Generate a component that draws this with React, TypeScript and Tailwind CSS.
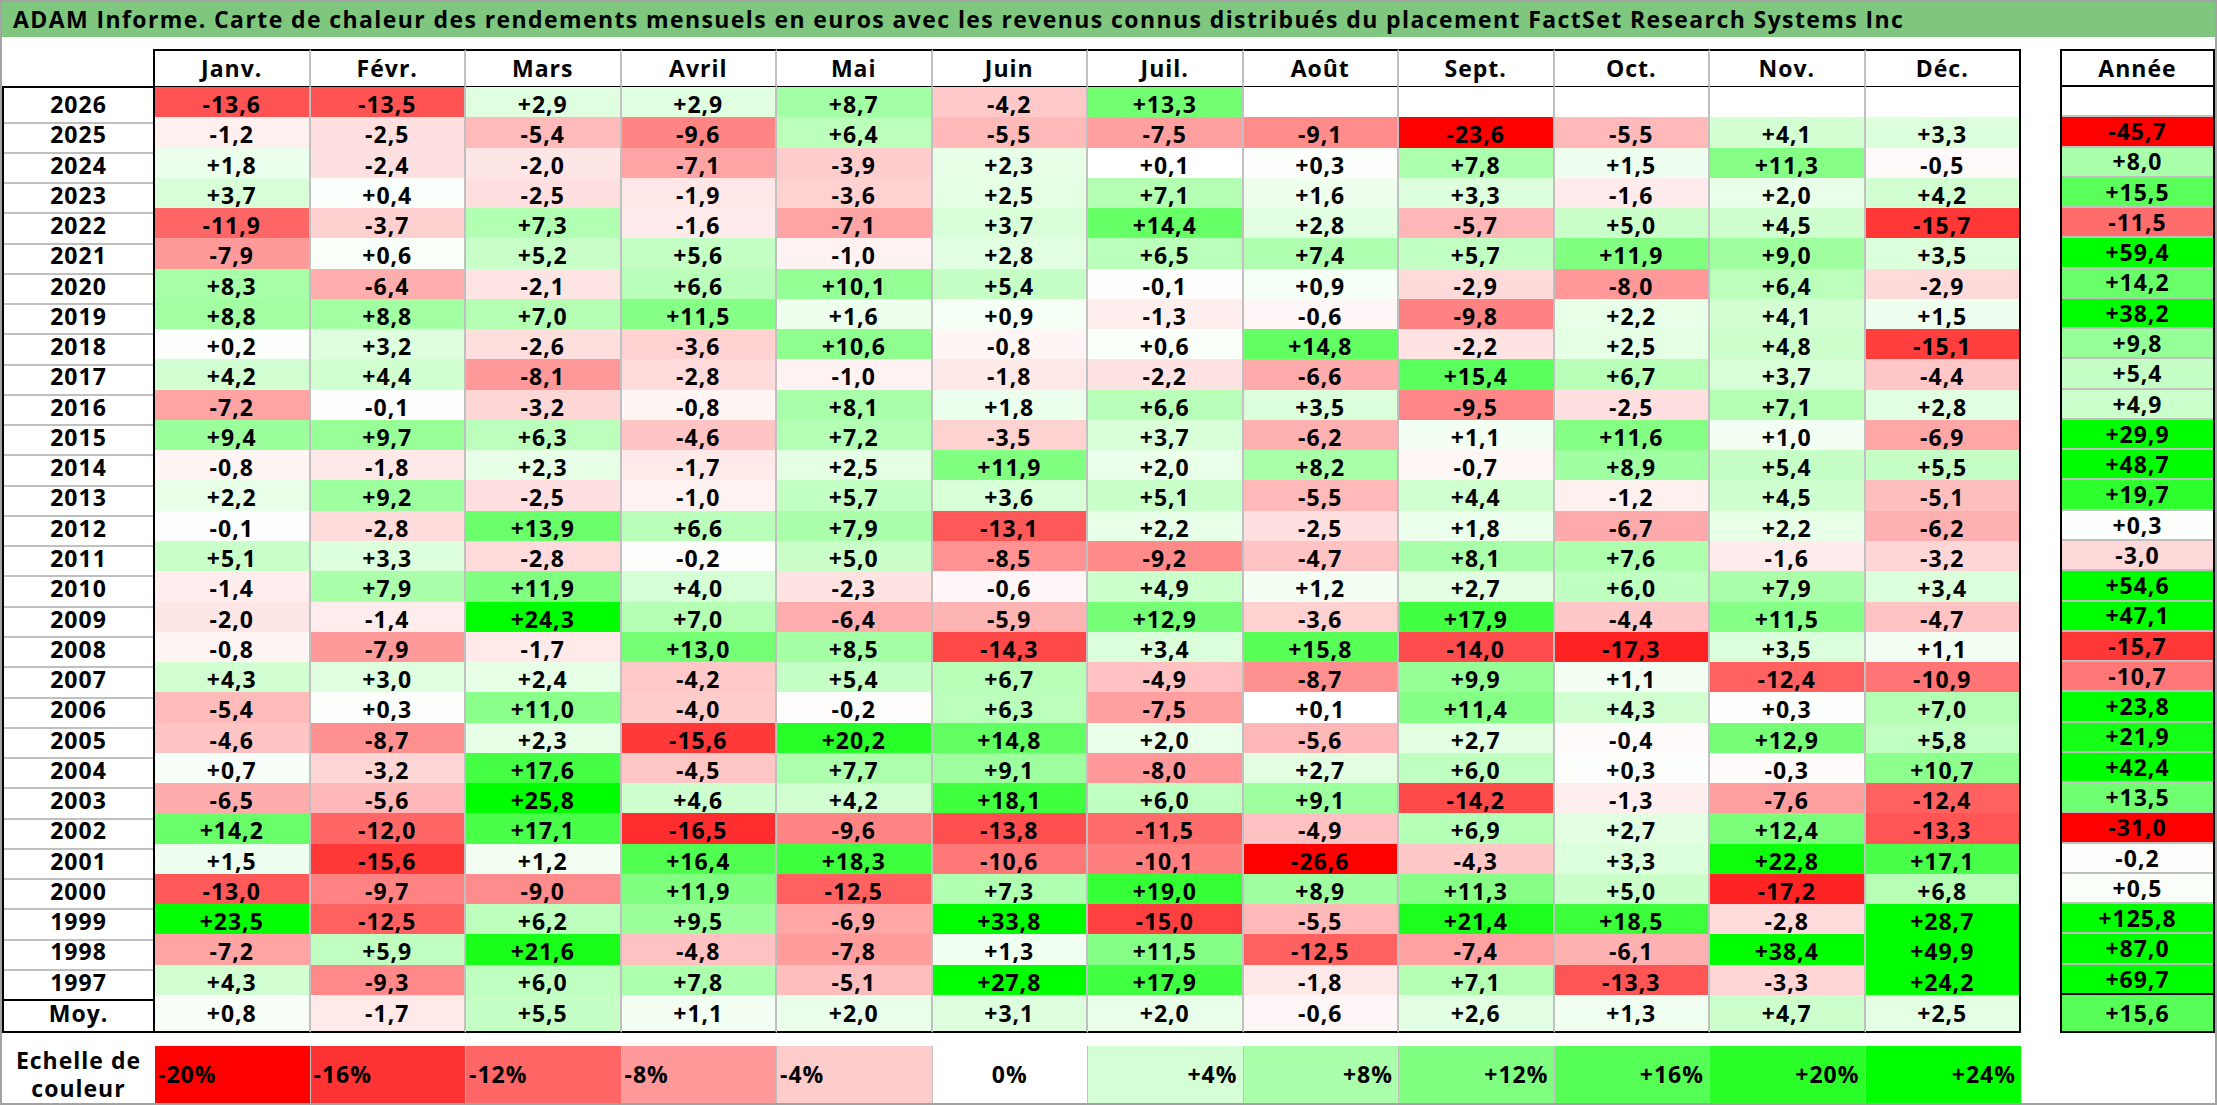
import React from 'react';

const MONTHS = ['Janv.', 'Févr.', 'Mars', 'Avril', 'Mai', 'Juin', 'Juil.', 'Août', 'Sept.', 'Oct.', 'Nov.', 'Déc.'];

// year | 12 months | annual total ("x" = no data yet)
const RAW: [string, string][] = [
  ['2026', '-13.6 -13.5 2.9 2.9 8.7 -4.2 13.3 x x x x x x'],
  ['2025', '-1.2 -2.5 -5.4 -9.6 6.4 -5.5 -7.5 -9.1 -23.6 -5.5 4.1 3.3 -45.7'],
  ['2024', '1.8 -2.4 -2.0 -7.1 -3.9 2.3 0.1 0.3 7.8 1.5 11.3 -0.5 8.0'],
  ['2023', '3.7 0.4 -2.5 -1.9 -3.6 2.5 7.1 1.6 3.3 -1.6 2.0 4.2 15.5'],
  ['2022', '-11.9 -3.7 7.3 -1.6 -7.1 3.7 14.4 2.8 -5.7 5.0 4.5 -15.7 -11.5'],
  ['2021', '-7.9 0.6 5.2 5.6 -1.0 2.8 6.5 7.4 5.7 11.9 9.0 3.5 59.4'],
  ['2020', '8.3 -6.4 -2.1 6.6 10.1 5.4 -0.1 0.9 -2.9 -8.0 6.4 -2.9 14.2'],
  ['2019', '8.8 8.8 7.0 11.5 1.6 0.9 -1.3 -0.6 -9.8 2.2 4.1 1.5 38.2'],
  ['2018', '0.2 3.2 -2.6 -3.6 10.6 -0.8 0.6 14.8 -2.2 2.5 4.8 -15.1 9.8'],
  ['2017', '4.2 4.4 -8.1 -2.8 -1.0 -1.8 -2.2 -6.6 15.4 6.7 3.7 -4.4 5.4'],
  ['2016', '-7.2 -0.1 -3.2 -0.8 8.1 1.8 6.6 3.5 -9.5 -2.5 7.1 2.8 4.9'],
  ['2015', '9.4 9.7 6.3 -4.6 7.2 -3.5 3.7 -6.2 1.1 11.6 1.0 -6.9 29.9'],
  ['2014', '-0.8 -1.8 2.3 -1.7 2.5 11.9 2.0 8.2 -0.7 8.9 5.4 5.5 48.7'],
  ['2013', '2.2 9.2 -2.5 -1.0 5.7 3.6 5.1 -5.5 4.4 -1.2 4.5 -5.1 19.7'],
  ['2012', '-0.1 -2.8 13.9 6.6 7.9 -13.1 2.2 -2.5 1.8 -6.7 2.2 -6.2 0.3'],
  ['2011', '5.1 3.3 -2.8 -0.2 5.0 -8.5 -9.2 -4.7 8.1 7.6 -1.6 -3.2 -3.0'],
  ['2010', '-1.4 7.9 11.9 4.0 -2.3 -0.6 4.9 1.2 2.7 6.0 7.9 3.4 54.6'],
  ['2009', '-2.0 -1.4 24.3 7.0 -6.4 -5.9 12.9 -3.6 17.9 -4.4 11.5 -4.7 47.1'],
  ['2008', '-0.8 -7.9 -1.7 13.0 8.5 -14.3 3.4 15.8 -14.0 -17.3 3.5 1.1 -15.7'],
  ['2007', '4.3 3.0 2.4 -4.2 5.4 6.7 -4.9 -8.7 9.9 1.1 -12.4 -10.9 -10.7'],
  ['2006', '-5.4 0.3 11.0 -4.0 -0.2 6.3 -7.5 0.1 11.4 4.3 0.3 7.0 23.8'],
  ['2005', '-4.6 -8.7 2.3 -15.6 20.2 14.8 2.0 -5.6 2.7 -0.4 12.9 5.8 21.9'],
  ['2004', '0.7 -3.2 17.6 -4.5 7.7 9.1 -8.0 2.7 6.0 0.3 -0.3 10.7 42.4'],
  ['2003', '-6.5 -5.6 25.8 4.6 4.2 18.1 6.0 9.1 -14.2 -1.3 -7.6 -12.4 13.5'],
  ['2002', '14.2 -12.0 17.1 -16.5 -9.6 -13.8 -11.5 -4.9 6.9 2.7 12.4 -13.3 -31.0'],
  ['2001', '1.5 -15.6 1.2 16.4 18.3 -10.6 -10.1 -26.6 -4.3 3.3 22.8 17.1 -0.2'],
  ['2000', '-13.0 -9.7 -9.0 11.9 -12.5 7.3 19.0 8.9 11.3 5.0 -17.2 6.8 0.5'],
  ['1999', '23.5 -12.5 6.2 9.5 -6.9 33.8 -15.0 -5.5 21.4 18.5 -2.8 28.7 125.8'],
  ['1998', '-7.2 5.9 21.6 -4.8 -7.8 1.3 11.5 -12.5 -7.4 -6.1 38.4 49.9 87.0'],
  ['1997', '4.3 -9.3 6.0 7.8 -5.1 27.8 17.9 -1.8 7.1 -13.3 -3.3 24.2 69.7'],
];
const AVG = '0.8 -1.7 5.5 1.1 2.0 3.1 2.0 -0.6 2.6 1.3 4.7 2.5 15.6';

const parse = (s: string) => s.split(' ').map((t) => (t === 'x' ? null : parseFloat(t)));
const ROWS = RAW.map(([label, s]) => ({ label, vals: parse(s) }));
const AVG_VALS = parse(AVG);

const SCALE = [-20, -16, -12, -8, -4, 0, 4, 8, 12, 16, 20, 24];

function heat(v: number | null) {
  if (v === null) return '#ffffff';
  if (v < 0) {
    const g = Math.round(255 * (1 - Math.min(-v / 20, 1)));
    return `rgb(255,${g},${g})`;
  }
  const c = Math.round(255 * (1 - Math.min(v / 24, 1)));
  return `rgb(${c},255,${c})`;
}

const fmt = (v: number | null) => (v === null ? '' : (v > 0 ? '+' : '') + v.toFixed(1).replace('.', ','));

const GRID = 'grid grid-cols-[153px_repeat(12,minmax(0,1fr))]';

function ValueCell({ v, last, bottom }: { v: number | null; last?: boolean; bottom?: boolean }) {
  return (
    <div
      className={`flex items-center justify-center border-r-2 border-b-2 ${last ? 'border-r-black' : 'border-r-[#c0c0c0]'} ${
        bottom ? 'border-b-black' : 'border-b-[#c0c0c0]'
      }`}
      style={{ backgroundColor: heat(v) }}
    >
      {fmt(v)}
    </div>
  );
}

export default function App() {
  return (
    <div className="w-[2217px] h-[1105px] overflow-hidden bg-white border-2 border-[#a3a3a3] font-['Open_Sans',sans-serif] font-bold text-[23px] tracking-[1px] text-black">
      <div className="h-[35px] bg-[#7fc77f] flex items-center pl-[11px] tracking-[1.4px] whitespace-nowrap">
        ADAM Informe. Carte de chaleur des rendements mensuels en euros avec les revenus connus distribués du placement FactSet Research Systems Inc
      </div>

      <div className="mt-[12px] flex">
        {/* monthly table */}
        <div className="w-[2019px]">
          <div className={`${GRID} h-[38px]`}>
            <div className="border-r-2 border-b-2 border-r-black border-b-black" />
            {MONTHS.map((m, i) => (
              <div
                key={m}
                className={`flex items-center justify-center border-t-2 border-b-2 border-r-2 border-t-black border-b-black ${
                  i === 11 ? 'border-r-black' : 'border-r-[#c0c0c0]'
                }`}
              >
                {m}
              </div>
            ))}
          </div>
          {ROWS.map((r, ri) => {
            const bottom = ri === ROWS.length - 1;
            return (
              <div key={r.label} className={`${GRID} h-[30.27px]`}>
                <div
                  className={`flex items-center justify-center border-l-2 border-r-2 border-b-2 border-l-black border-r-black ${
                    bottom ? 'border-b-black' : 'border-b-[#c0c0c0]'
                  }`}
                >
                  {r.label}
                </div>
                {r.vals.slice(0, 12).map((v, i) => (
                  <ValueCell key={i} v={v} last={i === 11} bottom={bottom} />
                ))}
              </div>
            );
          })}
          <div className={`${GRID} h-[38px]`}>
            <div className="flex items-center justify-center border-l-2 border-r-2 border-b-2 border-l-black border-r-black border-b-black">
              Moy.
            </div>
            {AVG_VALS.slice(0, 12).map((v, i) => (
              <ValueCell key={i} v={v} last={i === 11} bottom />
            ))}
          </div>
        </div>

        {/* annual column */}
        <div className="ml-[39px] w-[155px] flex flex-col border-l-2 border-r-2 border-black">
          <div className="h-[38px] flex items-center justify-center border-t-2 border-b-2 border-black">Année</div>
          {ROWS.map((r, ri) => (
            <div
              key={r.label}
              className={`h-[30.27px] flex items-center justify-center border-b-2 ${
                ri === ROWS.length - 1 ? 'border-b-black' : 'border-b-[#c0c0c0]'
              }`}
              style={{ backgroundColor: heat(r.vals[12]) }}
            >
              {fmt(r.vals[12])}
            </div>
          ))}
          <div
            className="h-[38px] flex items-center justify-center border-b-2 border-b-black"
            style={{ backgroundColor: heat(AVG_VALS[12]) }}
          >
            {fmt(AVG_VALS[12])}
          </div>
        </div>
      </div>

      {/* colour scale */}
      <div className={`mt-[13px] w-[2019px] h-[57px] ${GRID}`}>
        <div className="flex flex-col items-center justify-center leading-[28px]">
          <span>Echelle de</span>
          <span>couleur</span>
        </div>
        {SCALE.map((s, i) => (
          <div
            key={s}
            className={`flex items-center border-r border-[#c0c0c0] ${
              s < 0 ? 'justify-start pl-[3px]' : s === 0 ? 'justify-center' : 'justify-end pr-[5px]'
            } ${i === 11 ? 'border-r-0' : ''}`}
            style={{ backgroundColor: heat(s) }}
          >
            {(s > 0 ? '+' : '') + s + '%'}
          </div>
        ))}
      </div>
    </div>
  );
}
